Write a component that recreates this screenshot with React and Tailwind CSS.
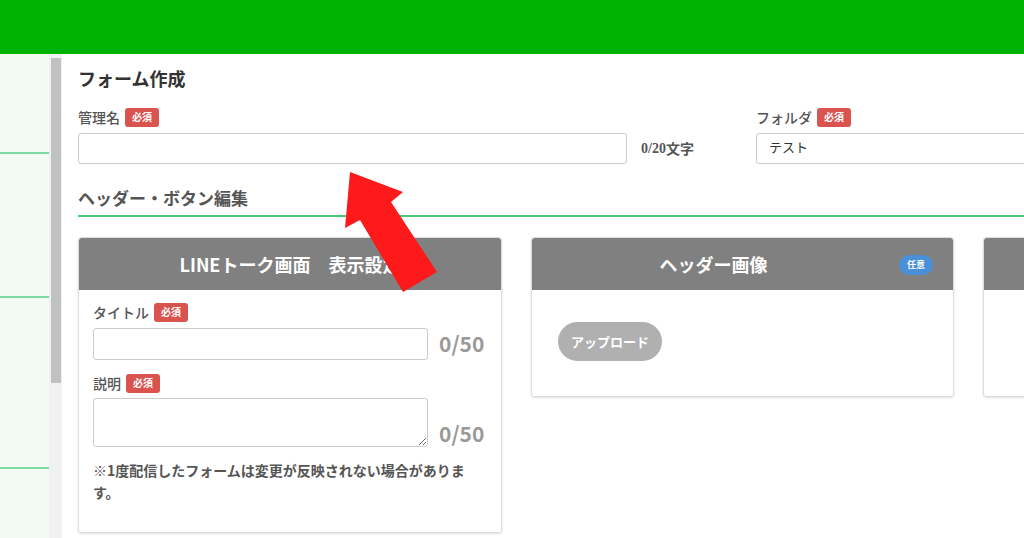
import React from 'react';

const jp = { fontFamily: '"Noto Sans CJK JP", "Noto Sans", sans-serif' };

function Required() {
	return (
		<span className="inline-flex items-center justify-center h-[19px] px-[7px] rounded-[3px] bg-[#d9534f] text-white text-[10px] font-bold leading-none">
			必須
		</span>
	);
}

function Label({ children, className = '' }) {
	return (
		<div className={`flex items-center gap-[5px] text-[14px] font-medium text-[#555] leading-5 ${className}`}>
			<span>{children}</span>
			<Required />
		</div>
	);
}

function CardHeader({ title, badge }) {
	return (
		<div className={`relative h-[52px] bg-[#808080] flex items-center justify-center rounded-t-[3px] ${badge ? 'pr-[58px]' : ''}`}>
			<span className="text-white text-[18px] font-bold">{title}</span>
			{badge && (
				<span className="absolute right-[20px] top-[17px] h-[20px] px-[8px] rounded-full bg-[#4a90d9] text-white text-[9px] font-bold flex items-center">
					{badge}
				</span>
			)}
		</div>
	);
}

export default function App() {
	return (
		<div className="relative w-[1024px] h-[538px] overflow-hidden bg-white flex flex-col" style={jp}>
			{/* top bar */}
			<div className="h-[54px] shrink-0 bg-[#00b200]"></div>

			<div className="flex flex-1 min-h-0">
				{/* sidebar */}
				<div className="w-[49px] shrink-0 bg-[#f3f9f3] flex flex-col">
					<div className="h-[100px] border-b-2 border-[#7ddaa0]"></div>
					<div className="h-[144px] border-b-2 border-[#7ddaa0]"></div>
					<div className="h-[171px] border-b-2 border-[#7ddaa0]"></div>
				</div>

				{/* scrollbar */}
				<div className="w-[13px] shrink-0 bg-[#f1f1f1] flex justify-center">
					<div className="mt-[4px] w-[10px] h-[325px] bg-[#c1c1c1]"></div>
				</div>

				{/* main */}
				<div className="flex-1 min-w-0 pl-4 pt-[12px]">
					<h1 className="text-[18px] font-bold text-[#333] leading-[24px]">フォーム作成</h1>

					<div className="mt-[17px] flex items-end">
						<div className="w-[549px] shrink-0">
							<Label>管理名</Label>
							<input
								className="mt-[6px] w-full h-[31px] border border-[#ccc] rounded-[3px] px-3 text-[13px]"
								defaultValue=""
							/>
						</div>
						<div className="w-[129px] shrink-0 h-[31px] flex items-center pl-[14px] text-[14px] font-bold text-[#555]">
							<span style={{ fontFamily: '"Liberation Serif", serif' }}>0/20</span>
							<span>文字</span>
						</div>
						<div className="w-[320px] shrink-0">
							<Label>フォルダ</Label>
							<div className="mt-[6px] w-full h-[31px] border border-[#ccc] rounded-[3px] pl-[12px] text-[13px] text-[#333] flex items-center">
								<span className="-mt-[3px]">テスト</span>
							</div>
						</div>
					</div>

					<div className="mt-[22px] pb-[5px] border-b-2 border-[#4cc978]">
						<h2 className="text-[17px] font-bold text-[#555] leading-[24px]">ヘッダー・ボタン編集</h2>
					</div>

					<div className="mt-[20px] flex items-start gap-[29px]">
						{/* card 1 */}
						<div className="w-[424px] shrink-0 border border-[#ddd] rounded-[3px] shadow-sm">
							<CardHeader title="LINEトーク画面　表示設定" />
							<div className="px-[14px] pt-[12px] pb-[29px]">
								<Label>タイトル</Label>
								<div className="mt-[6px] flex items-center">
									<input className="w-[335px] h-[32px] border border-[#ccc] rounded-[3px]" />
									<span className="ml-[11px] text-[21px] font-bold text-[#999]">0/50</span>
								</div>
								<Label className="mt-[13px]">説明</Label>
								<div className="mt-[5px] flex items-end">
									<textarea className="w-[335px] h-[49px] border border-[#ccc] rounded-[3px] resize-y block"></textarea>
									<span className="ml-[11px] mb-[1px] text-[21px] font-bold text-[#999] leading-[26px]">0/50</span>
								</div>
								<p className="mt-[12px] w-[378px] text-[14px] font-bold text-[#555] leading-[22px]">
									※1度配信したフォームは変更が反映されない場合があります。
								</p>
							</div>
						</div>

						{/* card 2 */}
						<div className="w-[423px] shrink-0 border border-[#ddd] rounded-[3px] shadow-sm">
							<CardHeader title="ヘッダー画像" badge="任意" />
							<div className="pl-[26px] pt-[32px] pb-[35px]">
								<button className="h-[39px] w-[104px] rounded-full bg-[#b0b0b0] text-white text-[13px] font-bold">
									アップロード
								</button>
							</div>
						</div>

						{/* card 3 (cut off) */}
						<div className="w-[300px] shrink-0 h-[160px] border border-[#ddd] rounded-[3px] shadow-sm">
							<div className="h-[52px] bg-[#808080] rounded-t-[3px]"></div>
						</div>
					</div>
				</div>
			</div>

			{/* red arrow overlay */}
			<svg className="absolute inset-0 pointer-events-none" width="1024" height="538" viewBox="0 0 1024 538">
				<polygon
					points="350,172 403,192 391,202 437,272 403,292 360,220 345,228"
					fill="#fe1a1a"
				/>
			</svg>
		</div>
	);
}
